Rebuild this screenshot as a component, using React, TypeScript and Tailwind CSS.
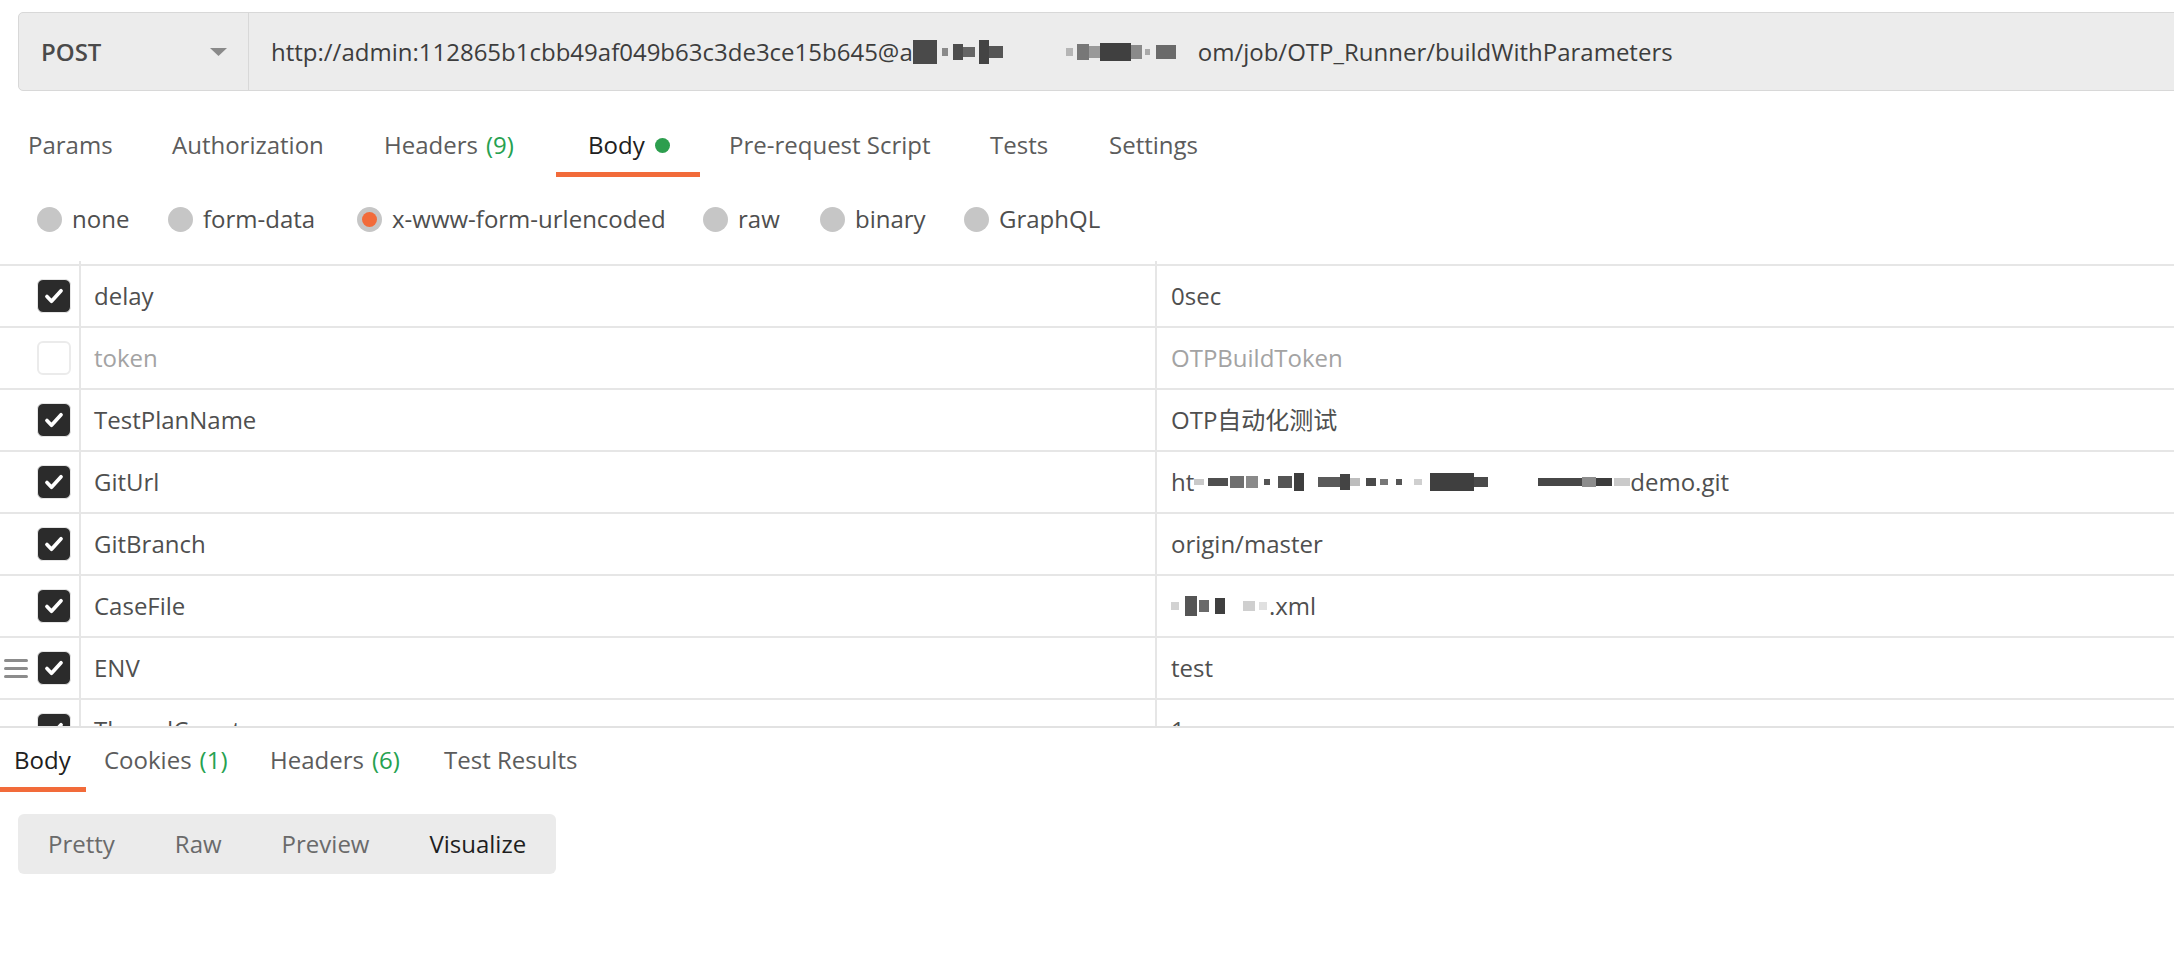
import React from 'react';

type Block = [number, number, string, number?];

function Mosaic({ blocks }: { blocks: Block[] }) {
  return (
    <span className="inline-flex items-center">
      {blocks.map(([w, h, c, gap], i) => (
        <span key={i} className="inline-block shrink-0" style={{ width: w, height: h, background: c, marginLeft: gap ?? 0 }} />
      ))}
    </span>
  );
}

const urlBlur: Block[] = [
  [24, 24, '#4a4a4a', 0], [6, 8, '#8a8a8a', 5], [10, 16, '#4d4d4d', 5], [12, 10, '#666', 0], [10, 24, '#444', 4],
  [14, 12, '#555', 0], [7, 8, '#b5b5b5', 63], [12, 16, '#777', 4], [11, 12, '#999', 0], [31, 18, '#404040', 0],
  [11, 14, '#8a8a8a', 0], [5, 6, '#aaa', 3], [20, 14, '#6a6a6a', 6],
];

const gitBlur: Block[] = [
  [10, 6, '#c9c9c9', 0], [20, 8, '#4f4f4f', 4], [14, 12, '#6f6f6f', 2], [12, 12, '#8a8a8a', 2], [6, 6, '#555', 6],
  [14, 12, '#555', 8], [10, 18, '#3e3e3e', 2], [22, 10, '#5a5a5a', 14], [10, 16, '#444', 0], [10, 8, '#bdbdbd', 0],
  [10, 8, '#4a4a4a', 6], [8, 6, '#777', 4], [6, 6, '#555', 8], [8, 6, '#cfcfcf', 12], [44, 18, '#3f3f3f', 8],
  [14, 10, '#4a4a4a', 0], [44, 8, '#474747', 50], [14, 10, '#8c8c8c', 0], [16, 8, '#3c3c3c', 0], [16, 8, '#cacaca', 2],
];

const caseBlur: Block[] = [
  [8, 8, '#d2d2d2', 0], [12, 20, '#555', 6], [10, 12, '#6a6a6a', 2], [10, 16, '#3f3f3f', 6], [12, 10, '#cfcfcf', 18], [8, 8, '#e0e0e0', 4],
];

const rows: { key: string; value: React.ReactNode; on: boolean; handle?: boolean }[] = [
  { key: 'delay', value: '0sec', on: true },
  { key: 'token', value: 'OTPBuildToken', on: false },
  { key: 'TestPlanName', value: 'OTP自动化测试', on: true },
  { key: 'GitUrl', value: <>ht<Mosaic blocks={gitBlur} /><span>demo.git</span></>, on: true },
  { key: 'GitBranch', value: 'origin/master', on: true },
  { key: 'CaseFile', value: <><Mosaic blocks={caseBlur} /><span className="ml-[2px]">.xml</span></>, on: true },
  { key: 'ENV', value: 'test', on: true, handle: true },
  { key: 'ThreadCount', value: '1', on: true },
];

function Check({ on }: { on: boolean }) {
  if (!on) return <span className="block h-[34px] w-[34px] rounded-[6px] border-2 border-[#ebebeb] bg-white" />;
  return (
    <span className="flex h-[34px] w-[34px] items-center justify-center rounded-[6px] border border-[#e6e6e6] bg-[#2b2b2b]">
      <svg className="h-[26px] w-[26px]" viewBox="0 0 24 24" fill="none" stroke="white" strokeWidth={3.4} strokeLinecap="round" strokeLinejoin="round">
        <path d="M5.5 12.5l4.2 4.3 8.8-9.6" />
      </svg>
    </span>
  );
}

function Radio({ on }: { on?: boolean }) {
  return (
    <span className="flex h-[25px] w-[25px] shrink-0 items-center justify-center rounded-full bg-[#c6c6c6]">
      {on && <span className="h-[15px] w-[15px] rounded-full bg-[#f26b3a]" />}
    </span>
  );
}

export default function App() {
  const reqTabs = [
    { label: 'Params', cls: 'w-[142px] pl-[28px]' },
    { label: 'Authorization', cls: 'w-[212px] pl-[30px]' },
    { label: 'Headers', count: '(9)', cls: 'w-[202px] pl-[30px]' },
    { label: 'Body', dot: true, active: true, cls: 'w-[144px] pl-[32px]' },
    { label: 'Pre-request Script', cls: 'w-[260px] pl-[29px]' },
    { label: 'Tests', cls: 'w-[119px] pl-[30px]' },
    { label: 'Settings', cls: 'w-[160px] pl-[30px]' },
  ];

  const bodyTypes = [
    { label: 'none', cls: 'w-[131px]' },
    { label: 'form-data', cls: 'w-[189px]' },
    { label: 'x-www-form-urlencoded', on: true, cls: 'w-[346px]' },
    { label: 'raw', cls: 'w-[117px]' },
    { label: 'binary', cls: 'w-[144px]' },
    { label: 'GraphQL', cls: 'w-[160px]' },
  ];

  const resTabs = [
    { label: 'Body', active: true, cls: 'w-[86px] pl-[14px]' },
    { label: 'Cookies', count: '(1)', cls: 'w-[170px] pl-[18px]' },
    { label: 'Headers', count: '(6)', cls: 'w-[174px] pl-[14px]' },
    { label: 'Test Results', cls: 'w-[200px] pl-[14px]' },
  ];

  return (
    <div className="h-[966px] w-[2174px] overflow-hidden bg-white font-['Open_Sans','Noto_Sans_CJK_SC',sans-serif] text-[24px] text-[#505050]">
      {/* URL bar */}
      <div className="ml-[18px] mt-[12px] flex h-[79px] w-[2200px] rounded-l-[5px] border border-[#d8d8d8] bg-[#ececec]">
        <div className="flex w-[230px] shrink-0 items-center justify-between border-r border-[#d8d8d8] pl-[22px] pr-[21px]">
          <span className="font-semibold text-[#4a4a4a]">POST</span>
          <svg className="h-[8px] w-[17px]" viewBox="0 0 17 8"><path d="M0 0h17L8.5 8z" fill="#8a8a8a" /></svg>
        </div>
        <div className="flex items-center whitespace-nowrap pl-[22px] text-[#3d3d3d]">
          http://admin:112865b1cbb49af049b63c3de3ce15b645@a
          <Mosaic blocks={urlBlur} />
          <span className="ml-[22px]">om/job/OTP_Runner/buildWithParameters</span>
        </div>
      </div>

      {/* request tabs */}
      <div className="mt-[27px] flex h-[59px]">
        {reqTabs.map((t) => (
          <div
            key={t.label}
            className={`flex shrink-0 items-center border-b-[5px] whitespace-nowrap ${t.cls} ${t.active ? 'border-[#f26b3a] text-[#202020]' : 'border-transparent text-[#5c5c5c]'}`}
          >
            {t.label}
            {t.count && <span className="ml-[8px] text-[#26a150]">{t.count}</span>}
            {t.dot && <span className="ml-[10px] h-[15px] w-[15px] rounded-full bg-[#2d9e4e]" />}
          </div>
        ))}
      </div>

      {/* body type */}
      <div className="flex h-[84px] items-center pl-[37px]">
        {bodyTypes.map((b) => (
          <div key={b.label} className={`flex shrink-0 items-center gap-[10px] whitespace-nowrap ${b.cls}`}>
            <Radio on={b.on} />
            <span className="text-[#4e4e4e]">{b.label}</span>
          </div>
        ))}
      </div>

      {/* key/value table */}
      <div className="h-[467px] overflow-hidden border-b-2 border-[#e2e2e2]">
        <div className="flex h-[3px]">
          <div className="w-[79px]" />
          <div className="w-[1076px] border-l-2 border-[#e6e6e6]" />
          <div className="flex-1 border-l-2 border-[#e6e6e6]" />
        </div>
        {rows.map((r) => (
          <div key={r.key} className="flex h-[62px] border-t-2 border-[#e6e6e6]">
            <div className="flex w-[79px] shrink-0 items-center">
              <div className="flex w-[37px] justify-start pl-[4px]">
                {r.handle && (
                  <span className="flex w-[24px] flex-col gap-[5px]">
                    <span className="h-[3px] rounded bg-[#8c8c8c]" />
                    <span className="h-[3px] rounded bg-[#8c8c8c]" />
                    <span className="h-[3px] rounded bg-[#8c8c8c]" />
                  </span>
                )}
              </div>
              <Check on={r.on} />
            </div>
            <div className={`flex w-[1076px] shrink-0 items-center border-l-2 border-[#e6e6e6] pl-[13px] ${r.on ? 'text-[#4f4f4f]' : 'text-[#a3a3a3]'}`}>
              {r.key}
            </div>
            <div className={`flex flex-1 items-center whitespace-nowrap border-l-2 border-[#e6e6e6] pl-[14px] ${r.on ? 'text-[#4f4f4f]' : 'text-[#a3a3a3]'}`}>
              {r.value}
            </div>
          </div>
        ))}
      </div>

      {/* response tabs */}
      <div className="flex h-[64px] pt-[5px]">
        {resTabs.map((t) => (
          <div
            key={t.label}
            className={`flex shrink-0 items-center border-b-[5px] whitespace-nowrap ${t.cls} ${t.active ? 'border-[#f26b3a] text-[#202020]' : 'border-transparent text-[#5c5c5c]'}`}
          >
            {t.label}
            {t.count && <span className="ml-[8px] text-[#26a150]">{t.count}</span>}
          </div>
        ))}
      </div>

      {/* view mode */}
      <div className="ml-[18px] mt-[22px] flex h-[60px] w-[538px] items-center rounded-[6px] bg-[#ebebeb]">
        {['Pretty', 'Raw', 'Preview', 'Visualize'].map((m) => (
          <span key={m} className={`px-[30px] ${m === 'Visualize' ? 'text-[#1e1e1e]' : 'text-[#6a6a6a]'}`}>
            {m}
          </span>
        ))}
      </div>
    </div>
  );
}
